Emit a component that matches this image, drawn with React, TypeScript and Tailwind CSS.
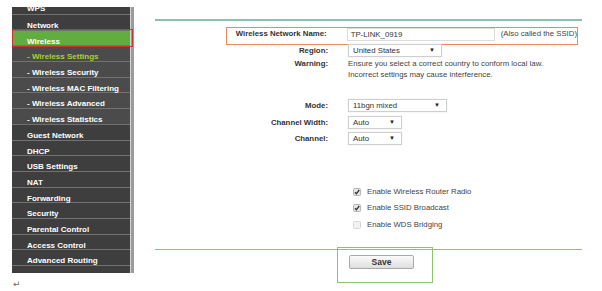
import React from "react";

const F = "font-['Liberation_Sans',Arial,sans-serif]";

function SideRow({ label, sub, active, current }: { label: string; sub?: boolean; active?: boolean; current?: boolean }) {
  const bg = active ? "bg-[#62ad40]" : sub ? "bg-[#4b4b4b]" : "bg-[#3e3e3e]";
  const color = current ? "text-[#a9cf3c]" : "text-white";
  return (
    <div className={`h-[15.7px] border-b border-[#727272] pl-[15px] pt-[6px] leading-[9px] text-[8px] font-bold whitespace-nowrap ${bg} ${color}`}>
      {label}
    </div>
  );
}

function Select({ value, w }: { value: string; w: string }) {
  return (
    <div className={`${w} h-[13px] bg-white border border-[#cfcfcf] shadow-[0_0_1px_rgba(0,0,0,0.15)] flex items-center justify-between pl-[4px] pr-[6px] text-[7.8px] leading-[11px] text-[#333]`}>
      <span>{value}</span>
      <span className="text-[6px] text-[#222]">▼</span>
    </div>
  );
}

function Check({ checked, label }: { checked: boolean; label: string }) {
  return (
    <div className="flex items-center h-[12px]">
      <div className="w-[5px]" />
      <svg width="8" height="8" viewBox="0 0 8 8" className="shrink-0">
        <rect x="0.5" y="0.5" width="7" height="7" rx="1" fill={checked ? "#e6e6e6" : "#f2f2f2"} stroke={checked ? "#b5b5b5" : "#d6d6d6"} />
        {checked && <path d="M2 4.2 L3.4 5.8 L6.2 2" stroke="#333" strokeWidth="1.3" fill="none" />}
      </svg>
      <span className="ml-[6px] text-[7.8px] leading-[12px] text-[#444] whitespace-nowrap">{label}</span>
    </div>
  );
}

export default function App() {
  return (
    <div className={`relative w-[602px] h-[291px] bg-white overflow-hidden ${F}`}>
      <div className="flex pt-[7px] pl-[12px]">
        <div className="border-r-[3px] border-[#9b9b9b]">
          <div className="w-[119px] border-r border-[#d3d3d3] bg-[#3e3e3e] h-[266px] overflow-hidden">
            <div className="h-[8px] border-b border-[#727272] overflow-hidden">
              <div className="pl-[15px] text-[8px] font-bold text-white leading-[10px] -mt-[3px]">WPS</div>
            </div>
            <SideRow label="Network" />
            <SideRow label="Wireless" active />
            <SideRow label="- Wireless Settings" sub current />
            <SideRow label="- Wireless Security" sub />
            <SideRow label="- Wireless MAC Filtering" sub />
            <SideRow label="- Wireless Advanced" sub />
            <SideRow label="- Wireless Statistics" sub />
            <SideRow label="Guest Network" />
            <SideRow label="DHCP" />
            <SideRow label="USB Settings" />
            <SideRow label="NAT" />
            <SideRow label="Forwarding" />
            <SideRow label="Security" />
            <SideRow label="Parental Control" />
            <SideRow label="Access Control" />
            <SideRow label="Advanced Routing" />
          </div>
        </div>

        <div className="flex-1 flex flex-col">
          <div className="mt-[12px] ml-[21px] mr-[20px] h-[1.5px] bg-[#8cbfae]" />

          <div className="ml-[92px] mt-[6px] w-[352px] h-[18px] border border-[#e8895c] flex items-start">
            <div className="w-[101px] text-right text-[7.8px] font-bold leading-[12px] text-[#333] whitespace-nowrap">Wireless Network Name:</div>
            <div className="ml-[20px] w-[150px] h-[13px] border border-[#dcdcdc] bg-white pl-[3px] text-[7.8px] leading-[11px] text-[#333]">TP-LINK_0919</div>
            <div className="ml-[6px] text-[7.8px] leading-[12px] text-[#444] whitespace-nowrap">(Also called the SSID)</div>
          </div>

          <div className="ml-[92px] -mt-[1px] flex items-start">
            <div className="w-[102px] text-right text-[7.8px] font-bold leading-[13px] text-[#333]">Region:</div>
            <div className="ml-[20px]"><Select value="United States" w="w-[94px]" /></div>
          </div>

          <div className="ml-[92px] mt-[1px] flex items-start">
            <div className="w-[102px] text-right text-[7.8px] font-bold leading-[11px] text-[#333]">Warning:</div>
            <div className="ml-[20px] text-[7.8px] leading-[11px] text-[#444] whitespace-nowrap">
              <div>Ensure you select a correct country to conform local law.</div>
              <div>Incorrect settings may cause interference.</div>
            </div>
          </div>

          <div className="ml-[92px] mt-[19.5px] flex items-start">
            <div className="w-[102px] text-right text-[7.8px] font-bold leading-[13px] text-[#333]">Mode:</div>
            <div className="ml-[20px]"><Select value="11bgn mixed" w="w-[99px]" /></div>
          </div>
          <div className="ml-[92px] mt-[3.5px] flex items-start">
            <div className="w-[102px] text-right text-[7.8px] font-bold leading-[13px] text-[#333]">Channel Width:</div>
            <div className="ml-[20px]"><Select value="Auto" w="w-[54px]" /></div>
          </div>
          <div className="ml-[92px] mt-[3.5px] flex items-start">
            <div className="w-[102px] text-right text-[7.8px] font-bold leading-[13px] text-[#333]">Channel:</div>
            <div className="ml-[20px]"><Select value="Auto" w="w-[54px]" /></div>
          </div>

          <div className="ml-[214px] mt-[40.5px] flex flex-col gap-[4.5px]">
            <Check checked label="Enable Wireless Router Radio" />
            <Check checked label="Enable SSID Broadcast" />
            <Check checked={false} label="Enable WDS Bridging" />
          </div>

          <div className="mt-[18px] ml-[21px] mr-[20px] h-[1px] bg-[#86bd93]" />

          <div className="ml-[215px] mt-[5px] flex">
            <button className="w-[65px] h-[14px] border border-[#a9a9a9] rounded-[2px] bg-gradient-to-b from-[#fbfbfb] to-[#dedede] text-[8.5px] font-bold leading-[12px] text-[#333] flex items-center justify-center">
              Save
            </button>
          </div>
        </div>
      </div>

      <div className="absolute left-[12px] top-[29px] w-[121px] h-[18px] border-[1.5px] border-[#c9342f]" />
      <div className="absolute left-[337px] top-[247px] w-[96px] h-[36px] border border-[#8dc46a]" />

      <div className="absolute left-[13px] top-[278px] text-[9px] leading-[12px] text-[#666] font-['DejaVu_Sans',sans-serif]">↵</div>
    </div>
  );
}
